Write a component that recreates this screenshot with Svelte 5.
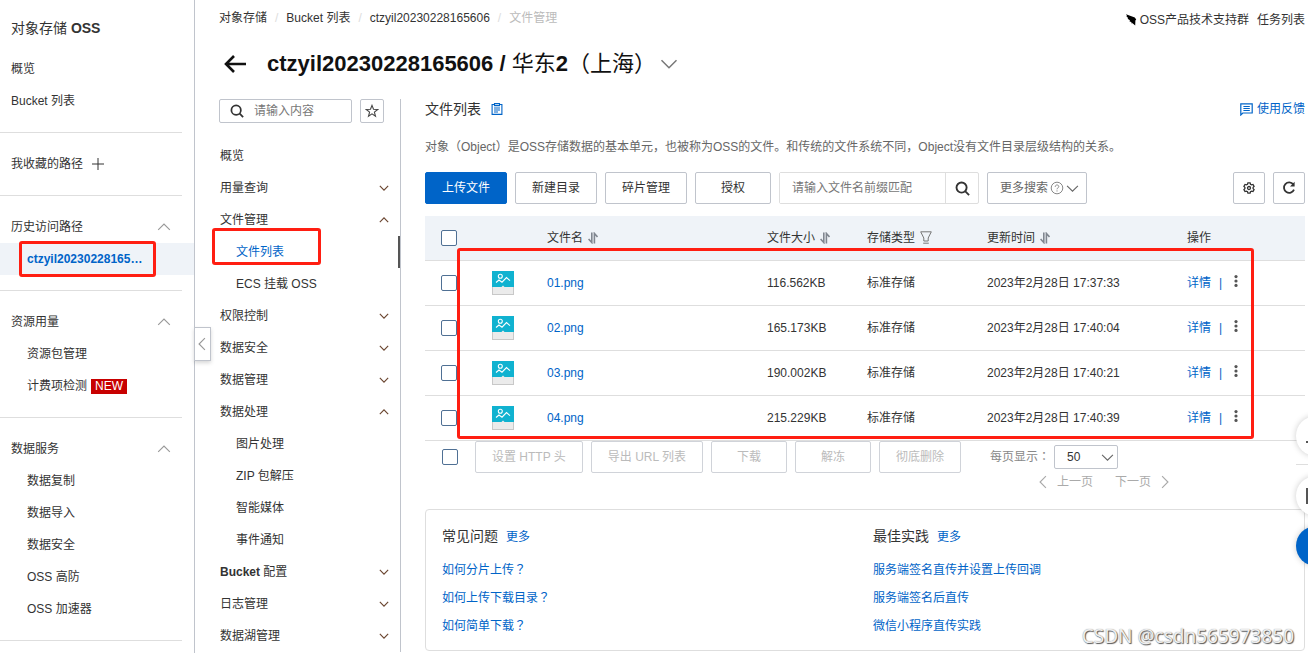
<script>
  const history = [{ label: 'ctzyil20230228165…', active: true }];
  const usage = [{ label: '资源包管理' }, { label: '计费项检测', isNew: true }];
  const services = [
    { label: '数据复制' },
    { label: '数据导入' },
    { label: '数据安全' },
    { label: 'OSS 高防' },
    { label: 'OSS 加速器' },
  ];
  const groups = [
    { title: '历史访问路径', items: history },
    { title: '资源用量', items: usage },
    { title: '数据服务', items: services },
  ];

  const bucketMenu = [
    { label: '概览' },
    { label: '用量查询', children: [] },
    { label: '文件管理', open: true, children: ['文件列表', 'ECS 挂载 OSS'] },
    { label: '权限控制', children: [] },
    { label: '数据安全', children: [] },
    { label: '数据管理', children: [] },
    { label: '数据处理', open: true, children: ['图片处理', 'ZIP 包解压', '智能媒体', '事件通知'] },
    { strong: 'Bucket', label: '配置', children: [] },
    { label: '日志管理', children: [] },
    { label: '数据湖管理', children: [] },
  ];

  const files = [
    { name: '01.png', size: '116.562KB', time: '2023年2月28日 17:37:33' },
    { name: '02.png', size: '165.173KB', time: '2023年2月28日 17:40:04' },
    { name: '03.png', size: '190.002KB', time: '2023年2月28日 17:40:21' },
    { name: '04.png', size: '215.229KB', time: '2023年2月28日 17:40:39' },
  ];

  const batchActions = ['设置 HTTP 头', '导出 URL 列表', '下载', '解冻', '彻底删除'];

  const help = [
    { title: '常见问题', question: true, links: ['如何分片上传', '如何上传下载目录', '如何简单下载'] },
    { title: '最佳实践', links: ['服务端签名直传并设置上传回调', '服务端签名后直传', '微信小程序直传实践'] },
  ];

  let currentItem = $state('文件列表');
</script>

{#snippet chevron(dir, size)}
  <svg class="chevron {dir}" width={size} height={size} viewBox="0 0 12 12" fill="none" stroke="currentColor">
    <path d="M1 3.5 6 8.5 11 3.5" />
  </svg>
{/snippet}

{#snippet searchIcon(size)}
  <svg width={size} height={size} viewBox="0 0 16 16" fill="none" stroke="#333" stroke-width="2">
    <circle cx="7" cy="7" r="5.4" />
    <path d="M10.8 10.8 15 15" />
  </svg>
{/snippet}

{#snippet sortIcon()}
  <svg class="sort" width="10" height="12" viewBox="0 0 10 12" fill="none" stroke="#808690" stroke-width="1.6">
    <path d="M3.8 0.5V10.5L0.6 7" />
    <path d="M6.4 11.5V1.5L9.5 5" />
  </svg>
{/snippet}

<div class="page">
  <aside class="product">
    <h2>对象存储 <b>OSS</b></h2>
    <nav>
      <a class="row" href="#overview">概览</a>
      <a class="row" href="#buckets">Bucket 列表</a>
      <hr />
      <div class="row">
        我收藏的路径
        <button class="icon-btn plus" aria-label="添加路径">
          <svg width="12" height="12" viewBox="0 0 12 12" stroke="#333"><path d="M6 0V12M0 6H12" /></svg>
        </button>
      </div>
      <hr />
      {#each groups as group}
        <button class="row group">
          {group.title}
          {@render chevron('up', 14)}
        </button>
        {#each group.items as item}
          <a class="row sub" class:active={item.active} href="#item">
            {item.label}
            {#if item.isNew}<span class="new">NEW</span>{/if}
            {#if item.active}<span class="mark mark-path"></span>{/if}
          </a>
        {/each}
        <hr />
      {/each}
    </nav>
    <button class="collapse" aria-label="收起">
      {@render chevron('left', 14)}
    </button>
  </aside>

  <main>
    <header class="top">
      <ol class="crumbs">
        <li><a href="#oss">对象存储</a></li>
        <li><a href="#buckets">Bucket 列表</a></li>
        <li><a href="#bucket">ctzyil20230228165606</a></li>
        <li class="here">文件管理</li>
      </ol>
      <div class="top-links">
        <a href="#support">
          <svg width="11" height="12" viewBox="0 0 11 12" fill="#000">
            <path d="M0 0.2 8.8 3.6 10.2 5.4 9.4 6.4 9.2 11.4 6.6 9.2 5.2 9.3 5.6 8.2 3.4 7.2 4 6.2 1.6 4.8 2.2 4 0.4 2.6 1 2Z" />
          </svg>
          OSS产品技术支持群
        </a>
        <a href="#tasks">任务列表</a>
      </div>
    </header>

    <div class="heading">
      <button class="icon-btn" aria-label="返回">
        <svg width="24" height="20" viewBox="0 0 24 20" fill="none" stroke="#111" stroke-width="2.6">
          <path d="M11 2 3 10 11 18M3 10H23" />
        </svg>
      </button>
      <h1><b>ctzyil20230228165606 /</b> 华东<b>2</b>（上海）</h1>
      <button class="icon-btn heading-toggle" aria-label="切换 Bucket">
        {@render chevron('down', 18)}
      </button>
    </div>

    <div class="body">
      <aside class="bucket-nav">
        <div class="nav-search">
          <label class="nav-input">
            {@render searchIcon(14)}
            <input type="text" placeholder="请输入内容" aria-label="请输入内容" />
          </label>
          <button class="star" aria-label="收藏">
            <svg width="14" height="14" viewBox="0 0 14 14" fill="none" stroke="#444" stroke-width="1.1">
              <path d="M7 1.4 8.5 5.3 12.7 5.5 9.4 8.1 10.5 12.2 7 9.9 3.5 12.2 4.6 8.1 1.3 5.5 5.5 5.3Z" />
            </svg>
          </button>
        </div>
        {#each bucketMenu as entry}
          <button class="row group">
            <span>{#if entry.strong}<b>{entry.strong}</b>&nbsp;{/if}{entry.label}</span>
            {#if entry.children}{@render chevron(entry.open ? 'up' : 'down', 10)}{/if}
          </button>
          {#each entry.children ?? [] as child}
            <a
              class="row sub"
              class:current={currentItem === child}
              href="#menu"
              onclick={() => (currentItem = child)}
            >
              {child}
              {#if child === '文件列表'}<span class="mark mark-menu"></span>{/if}
            </a>
          {/each}
        {/each}
      </aside>

      <section class="content">
        <div class="content-head">
          <h3>文件列表</h3>
          <svg width="12" height="12" viewBox="0 0 12 12" fill="none" stroke="#0064c8" stroke-width="1.1">
            <path d="M3.5 1.5H1.1V11.4H10.9V1.5H8.5" />
            <path d="M3.5 0.6H8.5V2.6H3.5ZM3 5H9M3 7H9M3 9H7" />
          </svg>
          <a class="feedback" href="#feedback">
            <svg width="13" height="13" viewBox="0 0 13 13" fill="none" stroke="#0064c8" stroke-width="1.2">
              <path d="M0.8 12V0.8H12.2V10H2.8Z" />
              <path d="M3.4 3.5H9.8M3.4 5.5H9.8M3.4 7.5H9.8" stroke-width="1" />
            </svg>
            使用反馈
          </a>
        </div>
        <p class="intro">
          对象（Object）是OSS存储数据的基本单元，也被称为OSS的文件。和传统的文件系统不同，Object没有文件目录层级结构的关系。
        </p>

        <div class="toolbar">
          <button class="btn primary">上传文件</button>
          <button class="btn">新建目录</button>
          <button class="btn">碎片管理</button>
          <button class="btn">授权</button>
          <div class="prefix-search">
            <input type="text" placeholder="请输入文件名前缀匹配" aria-label="请输入文件名前缀匹配" />
            <button aria-label="搜索">{@render searchIcon(15)}</button>
          </div>
          <button class="btn more">
            更多搜索
            <svg width="14" height="14" viewBox="0 0 14 14" fill="none" stroke="#888">
              <circle cx="7" cy="7" r="5.8" />
              <path d="M5.2 5.8C5.2 3.4 8.8 3.4 8.8 5.6 8.8 6.9 7 6.8 7 8.3M7 9.4V10.5" />
            </svg>
            {@render chevron('down', 13)}
          </button>
          <button class="btn square push" aria-label="设置">
            <svg width="12" height="12" viewBox="0 0 12 12" fill="none" stroke="#333" stroke-width="1.3">
              <path d="M4.9 0.8H7.1L7.5 2.2 8.6 2.8 10 2.4 11.1 4.3 10.1 5.4V6.6L11.1 7.7 10 9.6 8.6 9.2 7.5 9.8 7.1 11.2H4.9L4.5 9.8 3.4 9.2 2 9.6 0.9 7.7 1.9 6.6V5.4L0.9 4.3 2 2.4 3.4 2.8 4.5 2.2Z" />
              <circle cx="6" cy="6" r="1.5" />
            </svg>
          </button>
          <button class="btn square" aria-label="刷新">
            <svg width="14" height="14" viewBox="0 0 14 14" fill="none" stroke="#333" stroke-width="1.8">
              <path d="M11.3 3.4A5.2 5.2 0 1 0 12 8.6" />
              <path d="M12.6 0.8V5.4H8Z" fill="#333" stroke="none" />
            </svg>
          </button>
        </div>

        <div class="table-wrap">
          <table>
            <colgroup>
              <col class="c-check" />
              <col class="c-icon" />
              <col class="c-name" />
              <col class="c-size" />
              <col class="c-type" />
              <col class="c-time" />
              <col />
            </colgroup>
            <thead>
              <tr>
                <th><input type="checkbox" aria-label="全选" /></th>
                <th></th>
                <th>文件名 {@render sortIcon()}</th>
                <th>文件大小 {@render sortIcon()}</th>
                <th>
                  存储类型
                  <svg class="filter" width="12" height="13" viewBox="0 0 12 13" fill="none" stroke="#777">
                    <path d="M0.7 0.8H11.3L8.2 7V10H3.8V7ZM3.2 12.2H8.8" />
                  </svg>
                </th>
                <th>更新时间 {@render sortIcon()}</th>
                <th>操作</th>
              </tr>
            </thead>
            <tbody>
              {#each files as file}
                <tr>
                  <td><input type="checkbox" aria-label={file.name} /></td>
                  <td>
                    <svg class="thumb" width="22" height="24" viewBox="0 0 22 24">
                      <rect width="22" height="24" fill="#c8c8c8" />
                      <rect x="1" y="16" width="20" height="7" fill="#ebebeb" />
                      <rect width="22" height="16" fill="#10b2d0" />
                      <path d="M9.5 16 11 14.5 12.5 16Z" fill="#ebebeb" />
                      <g fill="none" stroke="#fff" stroke-width="1.1">
                        <circle cx="8.3" cy="5.2" r="2" />
                        <path d="M4 11.5 7 9 10 11.2 14.5 6.6 18 9.6" />
                      </g>
                    </svg>
                  </td>
                  <td><a class="file" href="#file">{file.name}</a></td>
                  <td>{file.size}</td>
                  <td>标准存储</td>
                  <td>{file.time}</td>
                  <td>
                    <div class="ops">
                      <a href="#detail">详情</a>
                      <span class="bar">|</span>
                      <button class="icon-btn" aria-label="更多操作">
                        <svg width="4" height="12" viewBox="0 0 4 12" fill="#555">
                          <circle cx="2" cy="1.6" r="1.6" />
                          <circle cx="2" cy="6" r="1.6" />
                          <circle cx="2" cy="10.4" r="1.6" />
                        </svg>
                      </button>
                    </div>
                  </td>
                </tr>
              {/each}
            </tbody>
          </table>
          <span class="mark mark-table"></span>
        </div>

        <div class="batch">
          <input type="checkbox" aria-label="全选本页" />
          {#each batchActions as action}
            <button class="btn" disabled>{action}</button>
          {/each}
          <label class="page-size">
            <span>每页显示<span class="centered">：</span></span>
            <span class="select">
              <select>
                <option>50</option>
              </select>
              {@render chevron('down', 13)}
            </span>
          </label>
        </div>
        <div class="pager">
          <button>{@render chevron('left', 14)}上一页</button>
          <button>下一页{@render chevron('right', 14)}</button>
        </div>

        <div class="help">
          {#each help as column}
            <div class="help-col">
              <h4>{column.title} <a href="#more">更多</a></h4>
              {#each column.links as link}
                <a href="#help">{link}{#if column.question}<span class="centered">？</span>{/if}</a>
              {/each}
            </div>
          {/each}
        </div>
      </section>
    </div>
  </main>

  <div class="floats">
    <button aria-label="通知">
      <svg width="20" height="20" viewBox="0 0 20 20" fill="none" stroke="#555" stroke-width="2"><path d="M0 16H20M3 16V8C3 0 17 0 17 8V16" /></svg>
    </button>
    <hr />
    <button aria-label="文档">
      <svg width="20" height="20" viewBox="0 0 20 20" fill="none" stroke="#555" stroke-width="2"><path d="M1 3H19V17H1Z" /></svg>
    </button>
    <button class="blue" aria-label="客服"></button>
  </div>
  <span class="watermark">CSDN @csdn565973850</span>
</div>

<style>
  :global(body) {
    margin: 0;
    background: #fff;
  }
  .page {
    position: relative;
    display: flex;
    height: 100vh;
    overflow: hidden;
    font: 12px/16px 'Liberation Sans', 'Noto Sans CJK SC', sans-serif;
    color: #333;
  }
  .page * { box-sizing: border-box; }
  a { color: inherit; text-decoration: none; }
  button, input, select {
    font: inherit;
    color: inherit;
    margin: 0;
    padding: 0;
  }
  button { border: 0; background: none; cursor: pointer; }
  h1, h2, h3, h4, p, ol { margin: 0; padding: 0; font-weight: 400; }
  svg { flex-shrink: 0; }

  .chevron.up { transform: rotate(180deg); }
  .chevron.left { transform: rotate(90deg); }
  .chevron.right { transform: rotate(-90deg); }
  .icon-btn { display: flex; align-items: center; }
  /* full-width punctuation that sits in the middle of its box */
  .centered { font-family: 'Noto Sans CJK TC', sans-serif; line-height: 12px; }

  .mark {
    position: absolute;
    border: 3px solid #ff1e12;
    border-radius: 3px;
    pointer-events: none;
  }
  .mark-path { inset: -2px 38px -2px 19px; }
  .mark-menu { inset: -8px 77px 3px -7px; }
  .mark-table { inset: 32px 51px 2px 32px; }

  .row {
    position: relative;
    display: flex;
    align-items: center;
    height: 32px;
    width: 100%;
    text-align: left;
  }

  .product {
    position: relative;
    flex: 0 0 195px;
    border-right: 1px solid #c0c4cc;
  }
  .product h2 {
    padding: 18px 11px 15px;
    font-size: 14px;
    line-height: 20px;
  }
  .product .row { padding: 0 23px 0 11px; }
  .product .row.sub { padding-left: 27px; }
  .product hr {
    margin: 15px 12px 15px 0;
    border: 0;
    border-top: 1px solid #dedede;
  }
  .product .group { justify-content: space-between; }
  .product .group svg { color: #999; }
  .product .active {
    background: #eff3f8;
    color: #0064c8;
    font-weight: 700;
  }
  .plus { margin-left: 9px; }
  .new {
    margin-left: 4px;
    padding: 0 4px;
    background: #c80000;
    color: #fff;
    line-height: 15px;
  }
  .collapse {
    position: absolute;
    top: 327px;
    right: -17px;
    display: flex;
    align-items: center;
    width: 17px;
    height: 34px;
    border: 1px solid #c0c4cc;
    background: #fff;
    color: #999;
    box-shadow: 0 2px 4px rgba(0, 0, 0, 0.16);
  }

  main { flex: 1; min-width: 0; padding: 10px 3px 0 24px; }
  .top { display: flex; justify-content: space-between; }
  .crumbs { display: flex; list-style: none; }
  .crumbs li + li::before {
    content: '/';
    margin: 0 8px;
    color: #ddd;
  }
  .here { color: #bbb; }
  .top-links { display: flex; gap: 8px; padding-top: 2px; }
  .top-links a { display: flex; align-items: center; gap: 3px; }

  .heading {
    display: flex;
    align-items: center;
    padding: 20px 0 19px 4px;
    color: #111;
  }
  h1 {
    margin: 0 4px 0 20px;
    font-size: 22px;
    line-height: 32px;
  }
  .heading-toggle { color: #777; }

  .body { display: flex; }
  .bucket-nav {
    flex: 0 0 182px;
    border-right: 1px solid #c0c4cc;
  }
  .nav-search { display: flex; gap: 8px; margin-bottom: 17px; }
  .nav-input {
    display: flex;
    align-items: center;
    gap: 10px;
    width: 133px;
    height: 24px;
    padding: 0 10px;
    border: 1px solid #c0c4cc;
    border-radius: 2px;
  }
  .nav-input input { flex: 1; min-width: 0; border: 0; outline: 0; background: none; }
  input::placeholder { color: #777; opacity: 1; }
  .star {
    display: grid;
    place-items: center;
    width: 24px;
    height: 24px;
    border: 1px solid #c0c4cc;
    border-radius: 2px;
  }
  .bucket-nav .row { padding: 0 11px 0 1px; }
  .bucket-nav .row.sub { padding-left: 17px; }
  .bucket-nav .group { justify-content: space-between; }
  .bucket-nav .group svg { color: #6b4630; stroke-width: 1.4; }
  .bucket-nav .current {
    border-right: 2px solid #555;
    color: #0064c8;
  }

  .content { flex: 1; min-width: 0; padding-left: 24px; }
  .content-head { display: flex; align-items: center; gap: 10px; }
  h3 { font-size: 14px; line-height: 20px; }
  .feedback {
    display: flex;
    align-items: center;
    gap: 4px;
    margin-left: auto;
    color: #0064c8;
  }
  .intro { margin: 20px 0 17px; color: #666; }

  .toolbar { display: flex; gap: 8px; }
  .btn {
    min-width: 76px;
    height: 32px;
    padding: 0 16px;
    border: 1px solid #c0c4cc;
    border-radius: 2px;
    background: #fff;
    white-space: nowrap;
  }
  .primary { border-color: #0064c8; background: #0064c8; color: #fff; }
  .prefix-search {
    display: flex;
    width: 200px;
    height: 32px;
    border: 1px solid #dedede;
    border-radius: 2px;
  }
  .prefix-search input { flex: 1; min-width: 0; padding: 0 12px; border: 0; outline: 0; }
  .prefix-search button {
    display: grid;
    place-items: center;
    width: 33px;
    border-left: 1px solid #dedede;
  }
  .more {
    display: flex;
    align-items: center;
    gap: 2px;
    width: 100px;
    padding: 0 0 0 12px;
    color: #666;
  }
  .square { display: grid; place-items: center; min-width: 32px; width: 32px; padding: 0; }
  .push { margin-left: auto; }

  .table-wrap { position: relative; margin-top: 12px; }
  table { width: 100%; table-layout: fixed; border-collapse: separate; border-spacing: 0; }
  .c-check { width: 51px; }
  .c-icon { width: 55px; }
  .c-name { width: 220px; }
  .c-size { width: 100px; }
  .c-type { width: 120px; }
  .c-time { width: 200px; }
  th, td {
    height: 45px;
    padding: 0 16px;
    border-bottom: 1px solid #dedede;
    text-align: left;
    font-weight: 400;
    white-space: nowrap;
  }
  th { background: #eff3f8; }
  th svg { margin: 0 0 2px 2px; vertical-align: middle; }
  input[type='checkbox'] {
    appearance: none;
    display: block;
    width: 16px;
    height: 16px;
    border: 1px solid #4f7094;
    border-radius: 2px;
    background: #fff;
  }
  .thumb { display: block; }
  .file, .ops a, .bar { color: #0064c8; }
  .ops { display: flex; align-items: center; gap: 8px; }
  .ops button { margin: 0 0 4px 4px; }

  .batch { display: flex; align-items: center; gap: 8px; }
  .batch input { margin: 0 9px 0 17px; }
  .batch .btn { border-color: #d0d3d9; color: #bbb; cursor: not-allowed; }
  .page-size {
    display: flex;
    align-items: center;
    gap: 4px;
    margin-left: 21px;
    color: #888;
  }
  .select { display: grid; align-items: center; justify-items: end; }
  .select > :global(*) { grid-area: 1 / 1; }
  .select svg { margin-right: 4px; pointer-events: none; z-index: 1; color: #666; }
  select {
    appearance: none;
    width: 64px;
    height: 24px;
    padding: 0 12px;
    border: 1px solid #c0c4cc;
    border-radius: 2px;
    background: #fff;
    color: #333;
  }
  .pager { display: flex; gap: 22px; margin: 1px 0 19px 611px; color: #aaa; }
  .pager button { display: flex; align-items: center; gap: 7px; }

  .help {
    display: grid;
    grid-template-columns: 1fr 1fr;
    gap: 16px;
    padding: 16px;
    border: 1px solid #dedede;
    border-radius: 4px;
  }
  .help-col { display: grid; gap: 12px; color: #0064c8; align-content: start; justify-items: start; }
  h4 { margin-bottom: 3px; color: #333; font-size: 14px; line-height: 20px; }
  h4 a { margin-left: 4px; color: #0064c8; font-size: 12px; }

  .floats {
    position: absolute;
    top: 416px;
    right: -28px;
    display: grid;
    gap: 10px;
    width: 40px;
  }
  .floats hr { width: 100%; margin: -2px 0 0; border: 0; border-top: 1px solid #dedede; }
  .floats button {
    display: grid;
    place-items: center;
    width: 40px;
    height: 40px;
    border-radius: 50%;
    background: #fff;
    box-shadow: 0 0 6px rgba(0, 0, 0, 0.2);
  }
  .floats .blue { background: #0064c8; }
  .watermark {
    position: absolute;
    right: 14px;
    bottom: 6px;
    font: 19px/22px 'Noto Sans', sans-serif;
    color: #eee;
    text-shadow: 1px 1px 1px #555, 0 0 1px #888;
  }
</style>
